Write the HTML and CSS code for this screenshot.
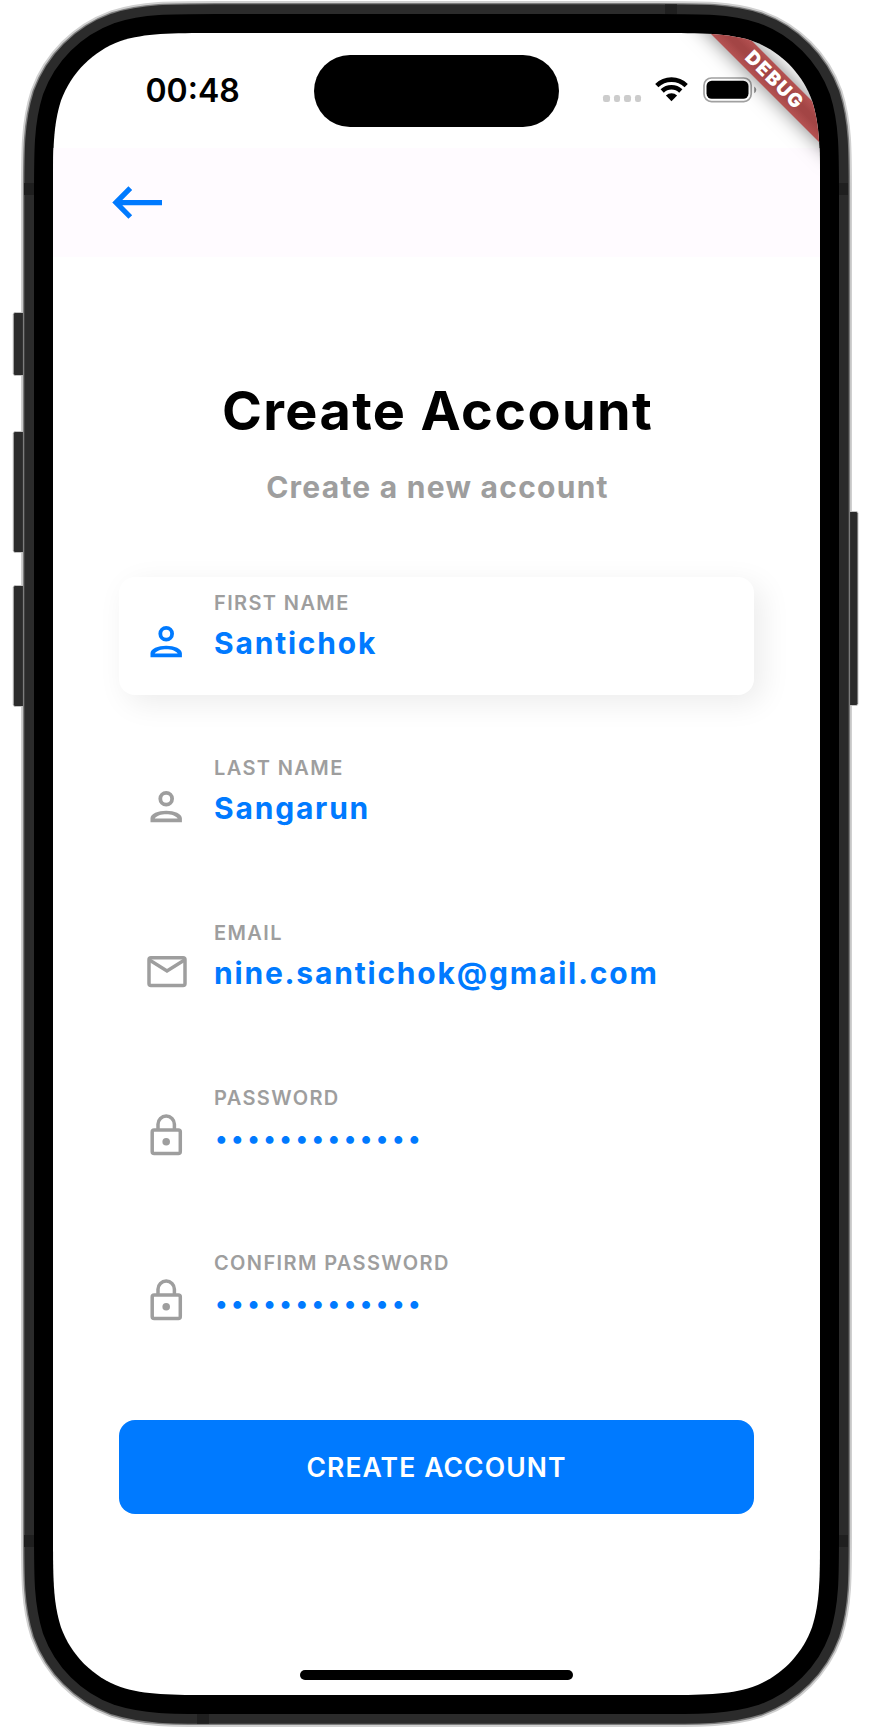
FILE: index.html
```html
<!DOCTYPE html>
<html lang="en">
<head>
<meta charset="utf-8">
<title>Create Account</title>
<link rel="stylesheet" href="styles.css">
</head>
<body>
<svg width="0" height="0" class="sprite" aria-hidden="true">
  <symbol id="person" viewBox="0 0 47 47">
    <circle cx="23.2" cy="15.7" r="5.9" fill="none" stroke="currentColor" stroke-width="3.8"/>
    <path fill="currentColor" fill-rule="evenodd" d="M7.5 39.3V35.3C7.5 30.6 15 27.7 23.2 27.7S38.9 30.6 38.9 35.3V39.3ZM11.7 35.5H34.7C33 32.8 28 31.3 23.2 31.3S13.4 32.8 11.7 35.5Z"/>
  </symbol>
  <symbol id="mail" viewBox="0 0 47 47">
    <g fill="none" stroke="currentColor" stroke-width="3.5">
      <rect x="6" y="9.7" width="36" height="27.7" rx="2"/>
      <path d="M6.5 12L24 23L41.5 12"/>
    </g>
  </symbol>
  <symbol id="lock" viewBox="0 0 47 47">
    <g fill="none" stroke="currentColor" stroke-width="3.5">
      <rect x="9.2" y="16.9" width="28.1" height="23.5" rx="2"/>
      <path d="M15 17V11.3a8.2 8.2 0 0 1 16.4 0V17"/>
    </g>
    <circle cx="23.2" cy="28.7" r="3.8" fill="currentColor"/>
  </symbol>
</svg>

<main class="phone">
  <svg class="frame" width="872" height="1730" viewBox="0 0 872 1730" aria-hidden="true">
    <defs>
      <path id="outline" transform="translate(53 33)" d="M163.57 0H603.43C650.53 0 674.08 0 699.43 8.02C727.11 18.09 748.91 39.89 758.98 67.57C767 92.92 767 116.47 767 163.57V1498.43C767 1545.53 767 1569.08 758.98 1594.43C748.91 1622.11 727.11 1643.91 699.43 1653.98C674.08 1662 650.53 1662 603.43 1662H163.57C116.47 1662 92.92 1662 67.57 1653.98C39.89 1643.91 18.09 1622.11 8.02 1594.43C0 1569.08 0 1545.53 0 1498.43V163.57C0 116.47 0 92.92 8.02 67.57C18.09 39.89 39.89 18.09 67.57 8.02C92.92 0 116.47 0 163.57 0Z"/>
    </defs>
    <use href="#outline" fill="none" stroke="#d0d0d0" stroke-width="64"/>
    <g fill="#2b2b2b" stroke="#c4c4c4" stroke-width="1">
      <rect x="13.2" y="312.5" width="12" height="63" rx="2"/>
      <rect x="13.2" y="431.5" width="12" height="121" rx="2"/>
      <rect x="13.2" y="585.5" width="12" height="121" rx="2"/>
      <rect x="846" y="511.5" width="12" height="194" rx="2"/>
    </g>
    <g fill="none">
      <use href="#outline" stroke="#7c7c7c" stroke-width="60.2"/>
      <use href="#outline" stroke="#2b2b2b" stroke-width="57.4"/>
    </g>
    <g fill="#1f1f1f">
      <rect x="24" y="183" width="10" height="12"/>
      <rect x="24" y="1535" width="10" height="12"/>
      <rect x="838.5" y="183" width="9.5" height="12"/>
      <rect x="838.5" y="1535" width="9.5" height="12"/>
      <rect x="665" y="4.3" width="12" height="10"/>
      <rect x="197" y="1714" width="12" height="9.7"/>
    </g>
    <use href="#outline" fill="none" stroke="#000" stroke-width="38"/>
  </svg>

  <div class="screen">
    <header class="status">
      <span class="time">00:48</span>
      <span class="island"></span>
      <span class="indicators">
        <span class="cell"><i></i><i></i><i></i><i></i></span>
        <svg width="33" height="25" viewBox="0 0 33 25">
          <g fill="none" stroke="#000" stroke-width="4.6">
            <path d="M1.8 8.6A21 21 0 0 1 31.2 8.6"/>
            <path d="M7.2 14A13.3 13.3 0 0 1 25.8 14"/>
          </g>
          <path d="M16.5 24.2L10.9 18.5A8 8 0 0 1 22.1 18.5Z"/>
        </svg>
        <svg class="battery" width="54" height="26" viewBox="0 0 54 26">
          <rect x="1" y="1" width="47.2" height="23.6" rx="7.5" fill="none" stroke="#a0a0a0" stroke-width="1.7"/>
          <rect x="3.5" y="3.8" width="42" height="17.9" rx="5.2"/>
          <path d="M51.2 9.4q2.1 1.1 2.1 3.4t-2.1 3.4Z" fill="#8f8f8f"/>
        </svg>
      </span>
    </header>

    <nav class="appbar">
      <svg width="52" height="36" viewBox="0 0 52 36" aria-label="Back">
        <path d="M19.3 3.2L5 17.6L19.3 32M5.5 17.6H51" fill="none" stroke="#007aff" stroke-width="5.3"/>
      </svg>
    </nav>

    <section class="content">
      <h1>Create Account</h1>
      <p class="subtitle">Create a new account</p>
      <form class="fields">
        <div class="field active">
          <svg class="icon"><use href="#person"/></svg>
          <div class="text"><label>FIRST NAME</label><span class="value">Santichok</span></div>
        </div>
        <div class="field">
          <svg class="icon"><use href="#person"/></svg>
          <div class="text"><label>LAST NAME</label><span class="value">Sangarun</span></div>
        </div>
        <div class="field">
          <svg class="icon"><use href="#mail"/></svg>
          <div class="text"><label>EMAIL</label><span class="value">nine.santichok@gmail.com</span></div>
        </div>
        <div class="field">
          <svg class="icon"><use href="#lock"/></svg>
          <div class="text"><label>PASSWORD</label><span class="value dots">•••••••••••••</span></div>
        </div>
        <div class="field">
          <svg class="icon"><use href="#lock"/></svg>
          <div class="text"><label>CONFIRM PASSWORD</label><span class="value dots">•••••••••••••</span></div>
        </div>
      </form>
      <button class="submit" type="button">CREATE ACCOUNT</button>
    </section>
    <div class="home"></div>
    <div class="debug">DEBUG</div>
  </div>
</main>
</body>
</html>
```
FILE: styles.css
```css
* { box-sizing: border-box; }

body {
  margin: 0;
  background: #fff;
  font-family: Inter, "Liberation Sans", sans-serif;
}

.sprite { position: absolute; }

.phone {
  position: relative;
  width: 872px;
  height: 1730px;
  padding: 33px 52px 35px 53px;
  overflow: hidden;
}

.frame {
  position: absolute;
  inset: 0;
}

.screen {
  position: relative;
  display: flex;
  flex-direction: column;
  width: 767px;
  height: 1662px;
  background: #fff;
  clip-path: path("M163.57 0H603.43C650.53 0 674.08 0 699.43 8.02C727.11 18.09 748.91 39.89 758.98 67.57C767 92.92 767 116.47 767 163.57V1498.43C767 1545.53 767 1569.08 758.98 1594.43C748.91 1622.11 727.11 1643.91 699.43 1653.98C674.08 1662 650.53 1662 603.43 1662H163.57C116.47 1662 92.92 1662 67.57 1653.98C39.89 1643.91 18.09 1622.11 8.02 1594.43C0 1569.08 0 1545.53 0 1498.43V163.57C0 116.47 0 92.92 8.02 67.57C18.09 39.89 39.89 18.09 67.57 8.02C92.92 0 116.47 0 163.57 0Z");
}

.status {
  display: grid;
  grid-template-columns: 261px 245px 1fr;
  height: 115px;
  padding-top: 22px;
}

.time {
  padding-left: 92.5px;
  padding-top: 16px;
  font-size: 32px;
  line-height: 39px;
  font-weight: 600;
}

.island {
  height: 72px;
  border-radius: 36px;
  background: #000;
}

.indicators {
  display: flex;
  align-items: flex-start;
  padding: 22px 0 0 44px;
}

.cell {
  display: flex;
  gap: 4px;
  width: 52px;
  padding-top: 18px;
}

.cell i {
  width: 6.5px;
  height: 6.5px;
  border-radius: 2.2px;
  background: #ccc;
}

.battery { margin-left: 15px; }

.appbar {
  height: 109px;
  padding: 37px 0 0 58px;
  background: #fffbff;
}

.content {
  display: flex;
  flex-direction: column;
  padding: 122px 66px 0;
}

h1 {
  margin: 0;
  padding-left: 2px;
  font-size: 54px;
  line-height: 64px;
  font-weight: 700;
  letter-spacing: 1.4px;
  text-align: center;
}

.subtitle {
  margin: 25px 0 0;
  padding-left: 2px;
  font-size: 30px;
  line-height: 38px;
  font-weight: 700;
  letter-spacing: 1.25px;
  text-align: center;
  color: #9e9e9e;
}

.fields {
  display: flex;
  flex-direction: column;
  gap: 47px;
  margin-top: 71px;
}

.field {
  display: flex;
  gap: 24px;
  height: 118px;
  padding-left: 24px;
  border-radius: 16px;
  color: #9e9e9e;
}

.active { box-shadow: 8px 8px 30px rgba(0, 0, 0, .08); }

.active .icon { color: #007aff; }

.icon {
  width: 47px;
  height: 47px;
  margin-top: 41px;
}

.text {
  display: flex;
  flex-direction: column;
  padding-top: 13px;
}

label {
  font-size: 20px;
  line-height: 27px;
  font-weight: 600;
  letter-spacing: 1.38px;
}

.value {
  margin-top: 6px;
  font-size: 30px;
  line-height: 40px;
  font-weight: 700;
  letter-spacing: 1.8px;
  color: #007aff;
}

.dots {
  margin: 6px 0 0 1px;
  font-size: 25px;
  font-weight: 600;
  letter-spacing: 3.5px;
}

.submit {
  height: 94px;
  margin-top: 65px;
  padding: 0;
  border: 0;
  border-radius: 16px;
  background: #007aff;
  color: #fff;
  font: 600 26.5px/94px Inter, sans-serif;
  letter-spacing: 1.1px;
}

.home {
  width: 273px;
  height: 10px;
  margin: auto auto 15px 247px;
  border-radius: 5px;
  background: #000;
}

.debug {
  position: absolute;
  left: 620px;
  top: 34px;
  width: 200px;
  height: 24px;
  padding-left: 4px;
  background: linear-gradient(#b55252, #a34545 40%, #a34545 60%, #b55252);
  box-shadow: 0 0 20px rgba(0, 0, 0, .5);
  color: #fff;
  font-size: 19px;
  line-height: 24px;
  font-weight: 900;
  letter-spacing: 1.6px;
  text-align: center;
  transform: rotate(45deg);
}
```
